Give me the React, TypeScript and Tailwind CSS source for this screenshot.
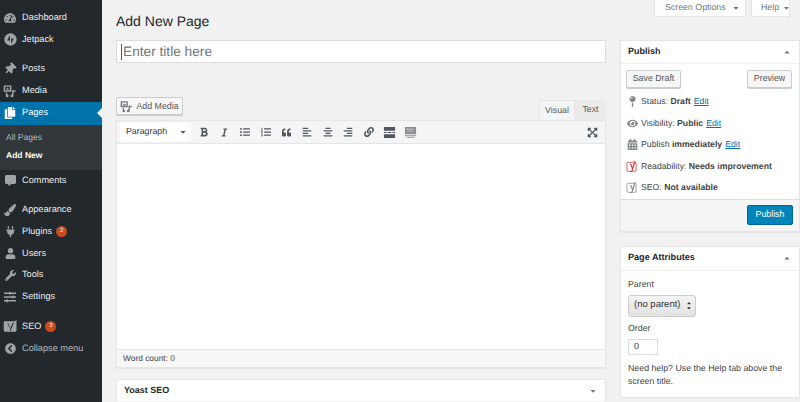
import {
  FaAlignCenter,
  FaAlignLeft,
  FaAlignRight,
  FaBold,
  FaCommentAlt,
  FaCopy,
  FaItalic,
  FaLink,
  FaListOl,
  FaListUl,
  FaPaintBrush,
  FaPlug,
  FaQuoteLeft,
  FaSlidersH,
  FaThumbtack,
  FaUser,
  FaWrench,
  FaTachometerAlt,
  FaEye,
  FaCalendarAlt,
  FaMapPin,
  FaCaretDown,
  FaCaretUp,
  FaChevronCircleLeft,
  FaExpandArrowsAlt,
} from "react-icons/fa";
import type { ReactNode } from "react";

function MediaIcon({ className }: { className?: string }) {
  return (
    <svg viewBox="0 0 20 20" className={className} fill="currentColor">
      <path d="M1 2h11v9H1V2zm2 2v5h7V4H3zm1 4l2-3 2 2 1-1v2H4z" fillRule="evenodd" />
      <path d="M13 9h5v2h-3v6a2.2 2 0 1 1-2-2V9z" />
      <path d="M4 12h2v3a2 2 0 1 1-2 2v-5z" />
    </svg>
  );
}

function JetpackIcon() {
  return (
    <svg viewBox="0 0 20 20" className="h-[13px] w-[13px] text-[#a0a5aa]" fill="currentColor">
      <circle cx="10" cy="10" r="9.5" />
      <path d="M9 3v8.5H5L9 3zm2 14V8.5h4L11 17z" fill="#23282d" />
    </svg>
  );
}

function YoastIcon({ className, color }: { className?: string; color: string }) {
  return (
    <svg viewBox="0 0 20 20" className={className} fill="none">
      <rect x="1.5" y="3.5" width="14" height="14" rx="2" stroke={color} strokeWidth="1.2" />
      <path d="M7 6l3 7M14 2l-4.5 14c-.5 1.2-1.5 1.8-3 2" stroke={color} strokeWidth="1.8" />
    </svg>
  );
}

function SeoIcon() {
  return (
    <svg viewBox="0 0 20 20" className="h-[15px] w-[15px] text-[#a0a5aa]" fill="currentColor">
      <path d="M2 3h14l2-2v14a2 2 0 0 1-2 2H3a2 2 0 0 1-2-2V5a2 2 0 0 1 1-2z" />
      <path d="M7 6l3 6 3-7h1.5l-4.5 11H9l1-3-4.500-7z" fill="#23282d" />
    </svg>
  );
}

function KitchenSink() {
  return (
    <svg viewBox="0 0 14 14" className="h-[13px] w-[13px] text-[#8c8f94]" fill="currentColor">
      <path d="M1 1h12v8H1V1zm0 9h12v1H1v-1zm2 2h8v1H3v-1z" />
      <path d="M3 3h1v1H3zm2 0h1v1H5zm2 0h1v1H7zm2 0h1v1H9zM4 5h1v1H4zm2 0h1v1H6zm2 0h1v1H8z" fill="#f5f5f5" />
    </svg>
  );
}

function MoreTag() {
  return (
    <svg viewBox="0 0 14 14" className="h-[13px] w-[13px] text-[#50575e]" fill="currentColor">
      <path d="M1 1h12v4H1V1zm0 8h12v4H1V9zM1 6.5h3v1H1zm4 0h4v1H5zm5 0h3v1h-3z" />
    </svg>
  );
}

type MenuItem = { label: string; icon: ReactNode; badge?: string; gap?: boolean };

function MenuRow({ label, icon, badge, gap }: MenuItem) {
  return (
    <div className={`flex h-[21.7px] items-center pl-[2px] text-[9.2px] text-[#eeeeee] ${gap ? "mt-[8px]" : ""}`}>
      <span className="flex w-[16px] justify-center text-[#a0a5aa]">{icon}</span>
      <span className="ml-[4px]">{label}</span>
      {badge && (
        <span className="ml-[4px] flex h-[11px] w-[11px] items-center justify-center rounded-full bg-[#ca4a1f] text-[6px] text-white">
          {badge}
        </span>
      )}
    </div>
  );
}

function Sidebar() {
  return (
    <aside className="h-[402px] w-[102px] shrink-0 bg-[#23282d] pt-[7px]">
      <MenuRow label="Dashboard" icon={<FaTachometerAlt size={12} />} />
      <MenuRow label="Jetpack" icon={<JetpackIcon />} />
      <MenuRow label="Posts" gap icon={<FaThumbtack size={12} className="rotate-45" />} />
      <MenuRow label="Media" icon={<MediaIcon className="h-[14px] w-[14px]" />} />
      <div className="relative flex h-[23px] items-center bg-[#0073aa] pl-[2px] text-[9.2px] text-white">
        <span className="flex w-[16px] justify-center text-white">
          <FaCopy size={12} />
        </span>
        <span className="ml-[4px]">Pages</span>
        <span className="absolute right-0 top-[6px] h-0 w-0 border-y-[5px] border-r-[5px] border-y-transparent border-r-[#f1f1f1]" />
      </div>
      <div className="h-[45px] bg-[#32373c] pl-[6px] pt-[4px] text-[8.5px]">
        <div className="flex h-[18px] items-center text-[#b4b9be]">All Pages</div>
        <div className="flex h-[18px] items-center font-bold text-white">Add New</div>
      </div>
      <MenuRow label="Comments" icon={<FaCommentAlt size={11} />} />
      <MenuRow label="Appearance" gap icon={<FaPaintBrush size={12} />} />
      <MenuRow label="Plugins" badge="2" icon={<FaPlug size={11} />} />
      <MenuRow label="Users" icon={<FaUser size={11} />} />
      <MenuRow label="Tools" icon={<FaWrench size={11} />} />
      <MenuRow label="Settings" icon={<FaSlidersH size={12} />} />
      <MenuRow label="SEO" gap badge="3" icon={<SeoIcon />} />
      <div className="flex h-[21.7px] items-center pl-[2px] text-[9.2px] text-[#b4b9be]">
        <span className="flex w-[16px] justify-center text-[#a0a5aa]">
          <FaChevronCircleLeft size={11} />
        </span>
        <span className="ml-[4px]">Collapse menu</span>
      </div>
    </aside>
  );
}

function ToolbarButton({ children, className }: { children: ReactNode; className?: string }) {
  return <span className={`flex h-[20px] w-[20.6px] items-center justify-center text-[#50575e] ${className ?? ""}`}>{children}</span>;
}

function Editor() {
  return (
    <div className="w-[490px]">
      <div className="flex h-[23px] items-end justify-between">
        <button className="mb-[5px] flex h-[18px] w-[67px] items-center justify-center gap-[3px] rounded-[2px] border border-[#cccccc] bg-[#f7f7f7] pt-[1px] text-[8.8px] text-[#555555] shadow-[0_1px_0_#cccccc]">
          <MediaIcon className="h-[13px] w-[13px] text-[#72777c]" />
          Add Media
        </button>
        <div className="flex text-[8.8px] text-[#555555]">
          <span className="flex h-[20px] w-[36px] items-center justify-center border border-b-0 border-[#e5e5e5] bg-[#f5f5f5]">Visual</span>
          <span className="flex h-[20px] w-[31px] items-center justify-center bg-[#ebebeb]">Text</span>
        </div>
      </div>
      <div className="border border-[#e5e5e5] bg-white shadow-[0_1px_1px_rgba(0,0,0,0.04)]">
        <div className="flex h-[23px] items-center border-b border-[#e5e5e5] bg-[#f5f5f5] pl-[3px] pr-[2px]">
          <div className="mr-[3px] flex h-[18px] w-[71px] items-center justify-between bg-white pl-[6px] pr-[4px] text-[8.8px] text-[#32373c]">
            Paragraph
            <FaCaretDown size={8} className="text-[#50575e]" />
          </div>
          <ToolbarButton><FaBold size={10} /></ToolbarButton>
          <ToolbarButton><FaItalic size={9} /></ToolbarButton>
          <ToolbarButton><FaListUl size={10} /></ToolbarButton>
          <ToolbarButton><FaListOl size={10} /></ToolbarButton>
          <ToolbarButton><FaQuoteLeft size={9} /></ToolbarButton>
          <ToolbarButton><FaAlignLeft size={10} /></ToolbarButton>
          <ToolbarButton><FaAlignCenter size={10} /></ToolbarButton>
          <ToolbarButton><FaAlignRight size={10} /></ToolbarButton>
          <ToolbarButton><FaLink size={10} /></ToolbarButton>
          <ToolbarButton><MoreTag /></ToolbarButton>
          <ToolbarButton><KitchenSink /></ToolbarButton>
          <ToolbarButton className="ml-auto"><FaExpandArrowsAlt size={11} /></ToolbarButton>
        </div>
        <div className="h-[205px] bg-white" />
        <div className="flex h-[18px] items-center border-t border-[#e5e5e5] bg-[#f7f7f7] pl-[6px] text-[8.4px] text-[#444444]">
          Word count: 0
        </div>
      </div>
      <div className="mt-[11px] flex h-[22px] items-center justify-between border border-b-0 border-[#e5e5e5] bg-white pl-[7px] pr-[8px] text-[9px] font-bold text-[#23282d]">
        Yoast SEO
        <FaCaretDown size={8} className="text-[#72777c]" />
      </div>
    </div>
  );
}

function StatusLine({ icon, children }: { icon: ReactNode; children: ReactNode }) {
  return (
    <div className="flex h-[21.5px] items-center text-[8.7px] text-[#444444]">
      <span className="mr-[1px] flex w-[13px] shrink-0 justify-center">{icon}</span>
      {children}
    </div>
  );
}

function Edit() {
  return <a className="ml-[3px] text-[#0073aa] underline">Edit</a>;
}

function PublishBox() {
  return (
    <section className="w-[180px] border border-[#e5e5e5] bg-white shadow-[0_1px_1px_rgba(0,0,0,0.04)]">
      <div className="flex h-[23px] items-center justify-between border-b border-[#eeeeee] pl-[7px] pr-[8px] text-[9px] font-bold text-[#23282d]">
        Publish
        <FaCaretUp size={8} className="text-[#72777c]" />
      </div>
      <div className="flex justify-between pl-[5px] pr-[7px] pt-[6px]">
        <button className="flex h-[18px] w-[55px] items-center justify-center rounded-[2px] border border-[#cccccc] bg-[#f7f7f7] text-[8.8px] text-[#555555] shadow-[0_1px_0_#cccccc]">Save Draft</button>
        <button className="flex h-[18px] w-[45px] items-center justify-center rounded-[2px] border border-[#cccccc] bg-[#f7f7f7] text-[8.8px] text-[#555555] shadow-[0_1px_0_#cccccc]">Preview</button>
      </div>
      <div className="pl-[5px] pr-[4px] pt-[3px]">
        <StatusLine icon={<FaMapPin size={11} className="text-[#82878c]" />}>
          <span className="ml-[1px]">Status: <b>Draft</b></span>
          <Edit />
        </StatusLine>
        <StatusLine icon={<FaEye size={11} className="text-[#82878c]" />}>
          <span className="ml-[1px]">Visibility: <b>Public</b></span>
          <Edit />
        </StatusLine>
        <StatusLine icon={<FaCalendarAlt size={11} className="text-[#82878c]" />}>
          <span className="ml-[1px]">Publish <b>immediately</b></span>
          <Edit />
        </StatusLine>
        <StatusLine icon={<YoastIcon className="h-[13px] w-[13px]" color="#dc3232" />}>
          <span className="ml-[1px]">Readability: <b>Needs improvement</b></span>
        </StatusLine>
        <StatusLine icon={<YoastIcon className="h-[13px] w-[13px]" color="#888888" />}>
          <span className="ml-[1px]">SEO: <b>Not available</b></span>
        </StatusLine>
      </div>
      <div className="flex h-[32px] items-center justify-end border-t border-[#dddddd] bg-[#f5f5f5] pr-[6px]">
        <button className="flex h-[20px] w-[46px] items-center justify-center rounded-[2px] border border-[#006799] bg-[#0085ba] text-[8.8px] text-white">Publish</button>
      </div>
    </section>
  );
}

function AttributesBox() {
  return (
    <section className="mt-[14px] h-[152px] w-[180px] border border-[#e5e5e5] bg-white">
      <div className="flex h-[24px] items-center justify-between border-b border-[#eeeeee] pl-[7px] pr-[8px] text-[9.1px] font-bold text-[#23282d]">
        Page Attributes
        <FaCaretUp size={8} className="text-[#72777c]" />
      </div>
      <div className="px-[7px] text-[8.8px] text-[#444444]">
        <div className="mt-[7px] h-[12px] leading-[12px]">Parent</div>
        <div className="mt-[5px] flex h-[22px] w-[68px] items-center justify-between rounded-[3px] border border-[#cccccc] bg-gradient-to-b from-[#f4f4f4] to-[#e2e2e2] pl-[5px] pr-[3px] text-[9.5px] text-[#333333]">
          (no parent)
          <span className="flex flex-col text-[#333333]">
            <FaCaretUp size={6} className="-mb-[1px]" />
            <FaCaretDown size={6} />
          </span>
        </div>
        <div className="mt-[4px] h-[14px] leading-[14px]">Order</div>
        <div className="mt-[4px] flex h-[16px] w-[30px] items-center border border-[#dddddd] bg-white pl-[5px] text-[9px] text-[#32373c]">0</div>
        <p className="mt-[7.5px] text-[8.8px] leading-[13px]">Need help? Use the Help tab above the screen title.</p>
      </div>
    </section>
  );
}

export default function App() {
  return (
    <div className="flex h-[402px] w-[800px] overflow-hidden bg-[#f1f1f1] font-['Liberation_Sans',sans-serif] [text-rendering:geometricPrecision]">
      <Sidebar />
      <main className="flex min-w-0 flex-1">
        <div className="ml-[14px] w-[490px] shrink-0">
          <h1 className="h-[40px] pt-[12px] text-[14px] leading-[18px] text-[#23282d]">Add New Page</h1>
          <div className="flex h-[23px] items-center border border-[#dddddd] bg-white pl-[4px] pt-[1px] text-[13.7px] text-[#72777c]">
            <span className="mr-[1px] h-[16px] w-px bg-[#50575e]" />
            Enter title here
          </div>
          <div className="h-[34px]" />
          <Editor />
        </div>
        <div className="ml-[14px] w-[180px] shrink-0">
          <div className="flex h-[40px] items-start justify-end pr-[10px]">
            <div className="flex h-[17px] w-[92px] items-center gap-[6px] border border-t-0 border-[#e5e5e5] bg-white pl-[10px] text-[8.8px] text-[#72777c]">
              Screen Options
              <FaCaretDown size={8} />
            </div>
            <div className="ml-[5px] flex h-[17px] w-[39px] items-center gap-[5px] border border-t-0 border-[#e5e5e5] bg-white pl-[9px] text-[8.8px] text-[#72777c]">
              Help
              <FaCaretDown size={8} />
            </div>
          </div>
          <PublishBox />
          <AttributesBox />
        </div>
      </main>
    </div>
  );
}
